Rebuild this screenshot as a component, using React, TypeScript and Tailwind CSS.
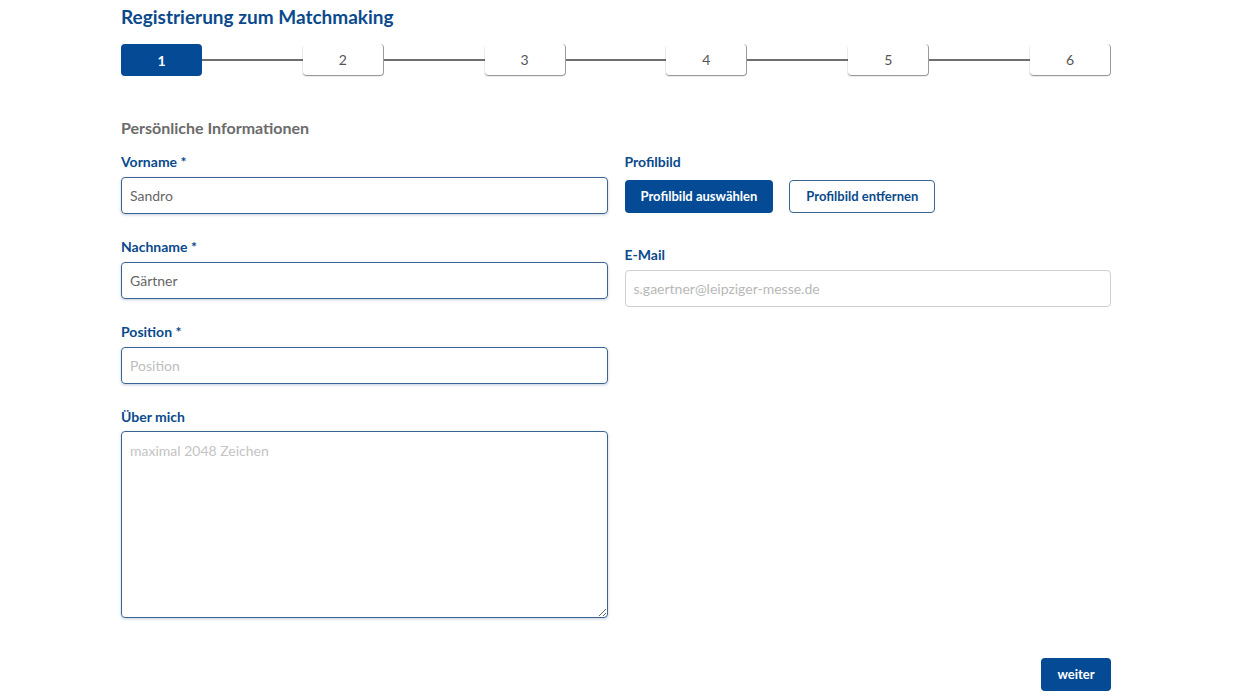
import { useState } from 'react';

const steps = ['1', '2', '3', '4', '5', '6'];

function Field({ label, value, placeholder }: { label: string; value?: string; placeholder?: string }) {
  const [val, setVal] = useState(value ?? '');
  return (
    <div className="mb-[24px]">
      <label className="block text-[14px] font-bold text-[#0a4a8c] leading-[18px] mb-[6px]">{label}</label>
      <input
        value={val}
        onChange={(e) => setVal(e.target.value)}
        placeholder={placeholder}
        className="w-full h-[37px] px-[8px] rounded-[4px] border border-[#3a6592] shadow-[0_1px_3px_rgba(10,60,120,0.25)] text-[14px] text-[#666] placeholder:text-[#bdbdbd] outline-none"
      />
    </div>
  );
}

export default function App() {
  return (
    <div className="min-h-screen bg-white font-['Lato','Liberation_Sans',sans-serif]">
      <div className="w-[990px] ml-[121px] pt-[5px]">
        <h1 className="text-[19px] font-bold text-[#0a4a8c] leading-[24px]">Registrierung zum Matchmaking</h1>

        {/* Stepper */}
        <div className="flex items-center mt-[15px]">
          {steps.map((s, i) => (
            <div key={s} className="contents">
              {i > 0 && <div className="flex-1 h-[1.5px] bg-[#6f6f6f]" />}
              {i === 0 ? (
                <div className="w-[81px] h-[32px] rounded-[4px] bg-[#054a94] text-white font-bold text-[14px] flex items-center justify-center">
                  {s}
                </div>
              ) : (
                <div className="w-[81px] h-[32px] rounded-[4px] border-b border-r border-[#9a9a9a] shadow-[-1px_1px_0_rgba(0,0,0,0.08)] text-[#555] text-[14px] flex items-center justify-center">
                  {s}
                </div>
              )}
            </div>
          ))}
        </div>

        <h2 className="mt-[42px] text-[16px] font-bold text-[#6b6b6b] leading-[20px]">Persönliche Informationen</h2>

        <div className="grid grid-cols-2 gap-x-[17px] mt-[15px]">
          <div>
            <Field label="Vorname *" value="Sandro" />
            <Field label="Nachname *" value="Gärtner" />
            <Field label="Position *" placeholder="Position" />
            <div>
              <label className="block text-[14px] font-bold text-[#0a4a8c] leading-[18px] mb-[5px]">Über mich</label>
              <textarea
                placeholder="maximal 2048 Zeichen"
                className="block w-full h-[187px] px-[8px] py-[8px] rounded-[4px] border border-[#3a6592] shadow-[0_1px_3px_rgba(10,60,120,0.25)] text-[14px] text-[#666] placeholder:text-[#c4c4c4] outline-none resize-y"
              />
            </div>
          </div>

          <div>
            <label className="block text-[14px] font-bold text-[#0a4a8c] leading-[18px]">Profilbild</label>
            <div className="flex gap-[16px] mt-[9px]">
              <button className="h-[33px] px-[16px] rounded-[4px] bg-[#054a94] text-white text-[13px] font-bold">
                Profilbild auswählen
              </button>
              <button className="h-[33px] px-[16px] rounded-[4px] border border-[#3a6592] bg-white text-[#0a4a8c] text-[13px] font-bold">
                Profilbild entfernen
              </button>
            </div>
            <label className="block text-[14px] font-bold text-[#0a4a8c] leading-[18px] mt-[33px] mb-[6px]">E-Mail</label>
            <input
              disabled
              placeholder="s.gaertner@leipziger-messe.de"
              className="w-full h-[37px] px-[8px] rounded-[4px] border border-[#cfcfcf] bg-white text-[14px] placeholder:text-[#b8b8b8] outline-none"
            />
          </div>
        </div>

        <div className="flex justify-end mt-[40px]">
          <button className="h-[33px] w-[70px] rounded-[4px] bg-[#054a94] text-white text-[13px] font-bold">weiter</button>
        </div>
      </div>
    </div>
  );
}
